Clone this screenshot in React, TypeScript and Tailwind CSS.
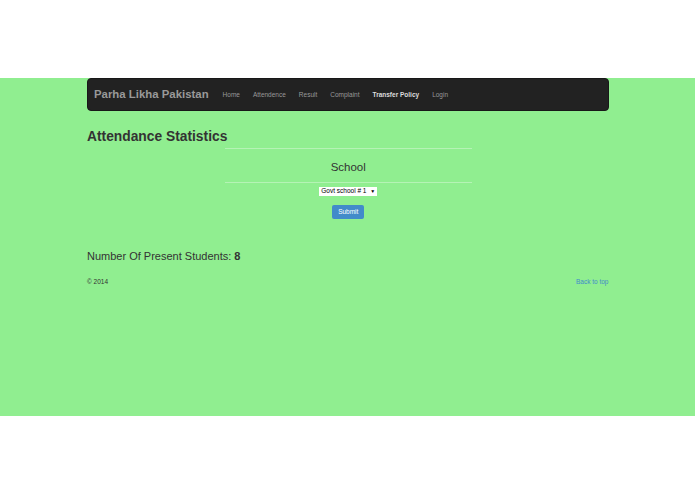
export default function App() {
  const links = ['Home', 'Attendence', 'Result', 'Complaint', 'Transfer Policy', 'Login'];
  return (
    <div className="min-h-[494px] bg-white font-['Liberation_Sans',Arial,sans-serif]">
      <div className="h-[78px]" />
      <div className="h-[338px] bg-[#90ee90]">
        <div className="mx-auto w-[522px] pl-[0.5px]">
          <nav className="flex h-[33px] items-center rounded-[4px] border border-[#181818] bg-[#222222] pl-[6px]">
            <span className="text-[11.4px] font-bold text-[#999999]">Parha Likha Pakistan</span>
            <ul className="ml-[14px] flex items-center gap-[13px] text-[6.5px] text-[#999999]">
              {links.map((l) => (
                <li key={l} className={l === 'Transfer Policy' ? 'font-bold text-[#dddddd]' : ''}>
                  {l}
                </li>
              ))}
            </ul>
          </nav>

          <h1 className="mt-[17px] text-[13.8px] leading-[18px] font-bold text-[#333333]">Attendance Statistics</h1>

          <div className="mx-auto mt-[2px] w-[248px] pl-[1px]">
            <div className="h-px bg-[#b5f3b5]" />
            <div className="pt-[12px] pb-[8px] text-center text-[11.5px] leading-[13px] text-[#333333]">School</div>
            <div className="h-px bg-[#b5f3b5]" />
            <div className="mt-[4px] flex justify-center">
              <div className="flex h-[9px] w-[58px] items-center justify-between bg-white px-[2px] text-[6.5px] leading-none text-black">
                <span>Govt school # 1</span>
                <span className="text-[5px]">▼</span>
              </div>
            </div>
            <div className="mt-[9px] flex justify-center">
              <button className="h-[14px] w-[32px] rounded-[2px] bg-[#428bca] text-[6.5px] text-white">Submit</button>
            </div>
          </div>

          <p className="mt-[31px] text-[11px] leading-[13px] text-[#333333]">
            Number Of Present Students: <b>8</b>
          </p>

          <div className="mt-[15px] flex items-center justify-between text-[6.5px] leading-[8px]">
            <span className="text-[#333333]">© 2014</span>
            <span className="text-[#428bca]">Back to top</span>
          </div>
        </div>
      </div>
    </div>
  );
}
